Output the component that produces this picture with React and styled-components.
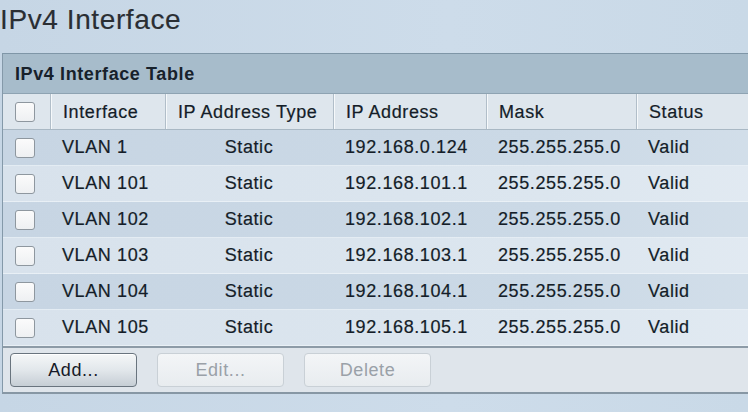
import React from "react";
import styled, { createGlobalStyle } from "styled-components";

const Global = createGlobalStyle`
  html, body { margin: 0; padding: 0; }
  body {
    background: #c9d9e7;
    font-family: "Liberation Sans", Arial, sans-serif;
    overflow: hidden;
  }
`;

const Page = styled.div`
  width: 748px;
  height: 412px;
  overflow: hidden;
  background: linear-gradient(90deg, #c6d6e5 0%, #cddcea 60%, #c9d9e7 100%);
`;

const Title = styled.h1`
  margin: 0;
  padding: 4px 0 0 0;
  font-size: 28px;
  line-height: 32px;
  font-weight: normal;
  letter-spacing: 0.6px;
  color: #2a2e33;
  height: 49px;
  -webkit-text-stroke: 0.15px #2a2e33;
`;

const Panel = styled.div`
  margin-left: 2px;
  width: 780px;
  border-top: 1px solid #7f96a7;
  border-left: 1px solid #8499a9;
  border-bottom: 2px solid #8797a4;
`;

const Caption = styled.div`
  height: 40px;
  display: flex;
  align-items: center;
  padding: 1px 0 0 12px;
  box-sizing: border-box;
  background: #a7bccb;
  border-bottom: 1px solid #8ea3b2;
  font-size: 18px;
  font-weight: bold;
  letter-spacing: 0.6px;
  color: #17212b;
`;

const Row = styled.div`
  display: grid;
  grid-template-columns: 47px 115px 168px 153px 150px 1fr;
  height: 36px;
  box-sizing: border-box;
  background: ${(p) =>
    p.$header
      ? "#dee6ed"
      : p.$odd
      ? "linear-gradient(90deg, #c7d5e3 0%, #cbd9e6 70%, #d3dfea 100%)"
      : "linear-gradient(90deg, #d8e2ec 0%, #dce6ef 70%, #e2eaf2 100%)"};
  border-bottom: 1px solid ${(p) => (p.$header ? "#a9b8c4" : "rgba(240,245,250,0.7)")};
`;

const Cell = styled.div`
  display: flex;
  align-items: center;
  justify-content: ${(p) => (p.$center ? "center" : "flex-start")};
  padding-left: ${(p) => (p.$center ? "0" : "12px")};
  font-size: 18px;
  letter-spacing: 0.6px;
  color: #141d28;
  -webkit-text-stroke: 0.2px #141d28;
  white-space: nowrap;
  ${(p) =>
    p.$sep &&
    `border-left: 1px solid #b1bec9; box-shadow: inset 1px 0 0 #f6f9fb;`}
`;

const BoxCell = styled.div`
  display: flex;
  align-items: center;
  padding-left: 12px;
`;

const Check = styled.span`
  display: inline-block;
  width: 20px;
  height: 20px;
  box-sizing: border-box;
  border: 1.5px solid #8e979f;
  border-radius: 3px;
  background: linear-gradient(180deg, #fbfbfb, #eef0f2);
`;

const HeadText = styled.span`
  padding-top: 2px;
`;

const Footer = styled.div`
  border-top: 2px solid #8d9ba7;
  background: #dfe5eb;
  height: 44px;
  display: flex;
  align-items: center;
  gap: 20px;
  padding-left: 7px;
`;

const Button = styled.button`
  width: 127px;
  height: 34px;
  box-sizing: border-box;
  border-radius: 4px;
  font-family: "Liberation Sans", Arial, sans-serif;
  font-size: 18px;
  letter-spacing: 0.6px;
  padding: 0;
  border: 1px solid ${(p) => (p.disabled ? "#c9d0d6" : "#69747e")};
  color: ${(p) => (p.disabled ? "#9aa1a8" : "#161a28")};
  background: ${(p) =>
    p.disabled
      ? "linear-gradient(180deg, #f3f5f7 0%, #e8ecef 100%)"
      : "linear-gradient(180deg, #f5f7f8 0%, #e2e7eb 50%, #c6ced5 100%)"};
  box-shadow: ${(p) => (p.disabled ? "none" : "inset 0 1px 0 #ffffff")};
`;

const rows = [
  ["VLAN 1", "192.168.0.124"],
  ["VLAN 101", "192.168.101.1"],
  ["VLAN 102", "192.168.102.1"],
  ["VLAN 103", "192.168.103.1"],
  ["VLAN 104", "192.168.104.1"],
  ["VLAN 105", "192.168.105.1"],
];

const heads = ["Interface", "IP Address Type", "IP Address", "Mask", "Status"];

export default function App() {
  return (
    <Page>
      <Global />
      <Title>IPv4 Interface</Title>
      <Panel>
        <Caption>IPv4 Interface Table</Caption>
        <Row $header>
          <BoxCell>
            <Check />
          </BoxCell>
          {heads.map((h) => (
            <Cell key={h} $sep>
              <HeadText>{h}</HeadText>
            </Cell>
          ))}
        </Row>
        {rows.map(([name, ip], i) => (
          <Row key={name} $odd={i % 2 === 0}>
            <BoxCell>
              <Check />
            </BoxCell>
            <Cell>{name}</Cell>
            <Cell $center>Static</Cell>
            <Cell>{ip}</Cell>
            <Cell>255.255.255.0</Cell>
            <Cell>Valid</Cell>
          </Row>
        ))}
        <Footer>
          <Button>Add...</Button>
          <Button disabled>Edit...</Button>
          <Button disabled>Delete</Button>
        </Footer>
      </Panel>
    </Page>
  );
}
